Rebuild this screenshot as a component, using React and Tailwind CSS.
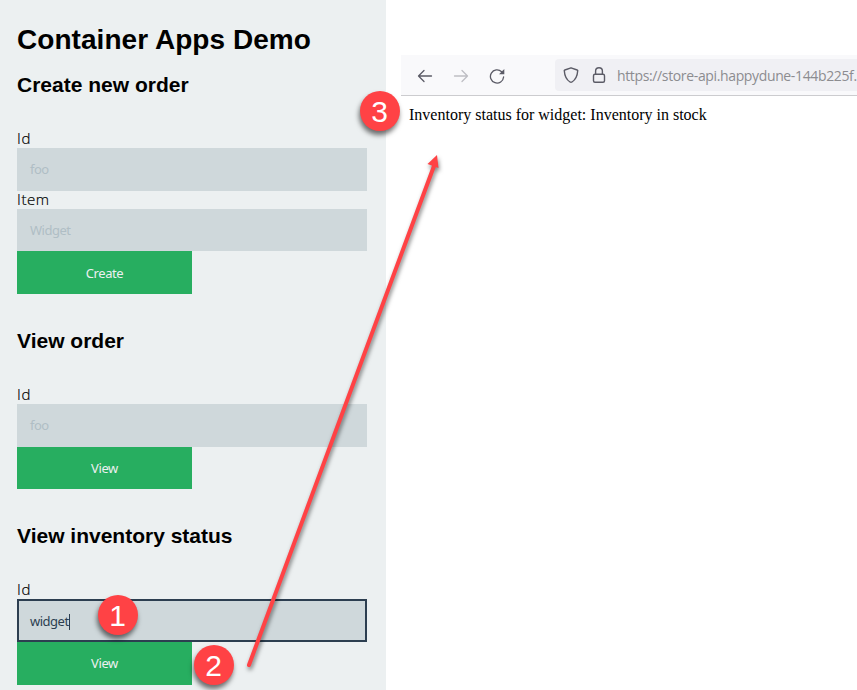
import React from "react";

const LABEL = "h-[18px] text-[15px] leading-4 tracking-[0.6px] text-black [-webkit-text-stroke:0.2px_black] font-light font-['Open_Sans','Noto_Sans',sans-serif]";
const BUTTON = "block w-[175px] bg-[#27ae60] text-center text-[13px] tracking-[-0.4px] text-[#ecf0f1] font-['Noto_Sans',sans-serif]";
const HEADING = "text-[21px] leading-6 font-bold text-black whitespace-nowrap";

function Badge({ n, className }) {
  return (
    <div
      className={`absolute flex size-10 items-center justify-center rounded-full bg-[#ff4245] pt-px pr-px text-[30px] leading-none text-white shadow-[-1px_4px_5px_rgba(0,0,0,0.55)] ${className}`}
    >
      {n}
    </div>
  );
}

function Field({ label, className, children }) {
  return (
    <div>
      <div className={LABEL}>{label}</div>
      <div
        className={`flex w-[350px] items-center bg-[#cfd8db] text-[13px] tracking-[-0.5px] font-['Noto_Sans',sans-serif] ${className}`}
      >
        {children}
      </div>
    </div>
  );
}

function Toolbar() {
  return (
    <div className="flex h-[41px] items-center border-b border-[#cccccf] bg-[#f9f9fb] pl-4 text-[#5b5b66]">
      <svg className="mt-px size-4 shrink-0" viewBox="0 0 16 16" fill="none" stroke="currentColor" strokeWidth="1.3" strokeLinecap="round" strokeLinejoin="round">
        <path d="M14.5 8H1.5M7 2.5L1.5 8L7 13.5" />
      </svg>
      <svg className="mt-px ml-5 size-4 shrink-0 text-[#bebec3]" viewBox="0 0 16 16" fill="none" stroke="currentColor" strokeWidth="1.3" strokeLinecap="round" strokeLinejoin="round">
        <path d="M1.5 8H14.5M9 2.5L14.5 8L9 13.5" />
      </svg>
      <svg className="mt-px ml-5 size-4 shrink-0" viewBox="0 0 16 16" fill="none" stroke="currentColor" strokeWidth="1.3" strokeLinecap="round">
        <path d="M14.6 9A6.6 6.6 0 1 1 12.6 3.7" />
        <path d="M15.3 1V6.3H10Z" fill="currentColor" stroke="none" />
      </svg>
      <div className="ml-[50px] flex h-8 min-w-0 flex-1 items-center rounded-l bg-[#f0f0f4] pl-2">
        <svg className="size-4 shrink-0" viewBox="0 0 16 16" fill="none" stroke="currentColor" strokeWidth="1.4" strokeLinejoin="round">
          <path d="M8 0.8L14.2 3C14.6 3.1 14.8 3.4 14.7 3.8C14.4 8.7 12.8 12.6 9 15C8.3 15.4 7.7 15.4 7 15C3.2 12.6 1.6 8.7 1.3 3.8C1.2 3.4 1.4 3.1 1.8 3Z" />
        </svg>
        <svg className="ml-3 size-4 shrink-0" viewBox="0 0 16 16" fill="none" stroke="currentColor" strokeWidth="1.4">
          <rect x="2.5" y="7.3" width="11" height="7.9" rx="1.5" />
          <path d="M4.6 7.3V4.1a3.4 3.4 0 0 1 6.8 0V7.3" />
        </svg>
        <span className="mt-0.5 ml-2.5 whitespace-nowrap text-[14px] leading-5 tracking-[-0.36px] text-[#8c8c90] font-['Open_Sans','Noto_Sans',sans-serif]">
          https://store-api.happydune-144b225f.
        </span>
      </div>
    </div>
  );
}

export default function App() {
  return (
    <div className="relative flex h-[690px] w-[857px] overflow-hidden bg-white font-['Liberation_Sans',Arial,sans-serif]">
      <div className="w-[386px] shrink-0 bg-[#ecf0f1] pl-[17px]">
        <h1 className="mt-[23px] h-[50px] whitespace-nowrap text-[28px] leading-[33px] font-bold tracking-[0.05px] text-black">
          Container Apps Demo
        </h1>
        <h2 className={`${HEADING} h-[57px]`}>Create new order</h2>
        <Field label="Id" className="h-[43px] pl-[13px] text-[#b0bec5]">foo</Field>
        <Field label="Item" className="h-[42px] pt-0.5 pl-[13px] text-[#b0bec5]">Widget</Field>
        <button className={`${BUTTON} h-[43px] pt-0.5`}>Create</button>

        <h2 className={`${HEADING} mt-[35px] h-[57px]`}>View order</h2>
        <Field label="Id" className="h-[43px] pl-[13px] text-[#b0bec5]">foo</Field>
        <button className={`${BUTTON} h-[42px] pt-0.5`}>View</button>

        <h2 className={`${HEADING} mt-[35px] h-[57px]`}>View inventory status</h2>
        <Field label="Id" className="h-[43px] border-2 border-[#2c3e50] pt-0.5 pl-[11px] text-[#2c3e50]">
          widget
          <span className="h-4 w-px bg-[#2c3e50]" />
        </Field>
        <button className={`${BUTTON} h-[43px]`}>View</button>
      </div>

      <div className="ml-[15px] mt-[55px] min-w-0 flex-1">
        <Toolbar />
        <p className="mt-2 ml-2 whitespace-nowrap text-[16px] leading-[21px] text-black font-['Liberation_Serif','Times_New_Roman',serif]">
          Inventory status for widget: Inventory in stock
        </p>
      </div>

      <svg className="absolute top-0 left-0 h-[690px] w-[857px] drop-shadow-[1px_3px_2px_rgba(0,0,0,0.5)]" viewBox="0 0 857 690">
        <path d="M249 665L434 166" stroke="#ff4245" strokeWidth="4" strokeLinecap="round" />
        <path d="M437 155L438.5 168L427.5 164Z" fill="#ff4245" />
      </svg>
      <Badge n="1" className="top-[595px] left-[98px]" />
      <Badge n="2" className="top-[645px] left-[194px]" />
      <Badge n="3" className="top-[91px] left-[360px]" />
    </div>
  );
}
